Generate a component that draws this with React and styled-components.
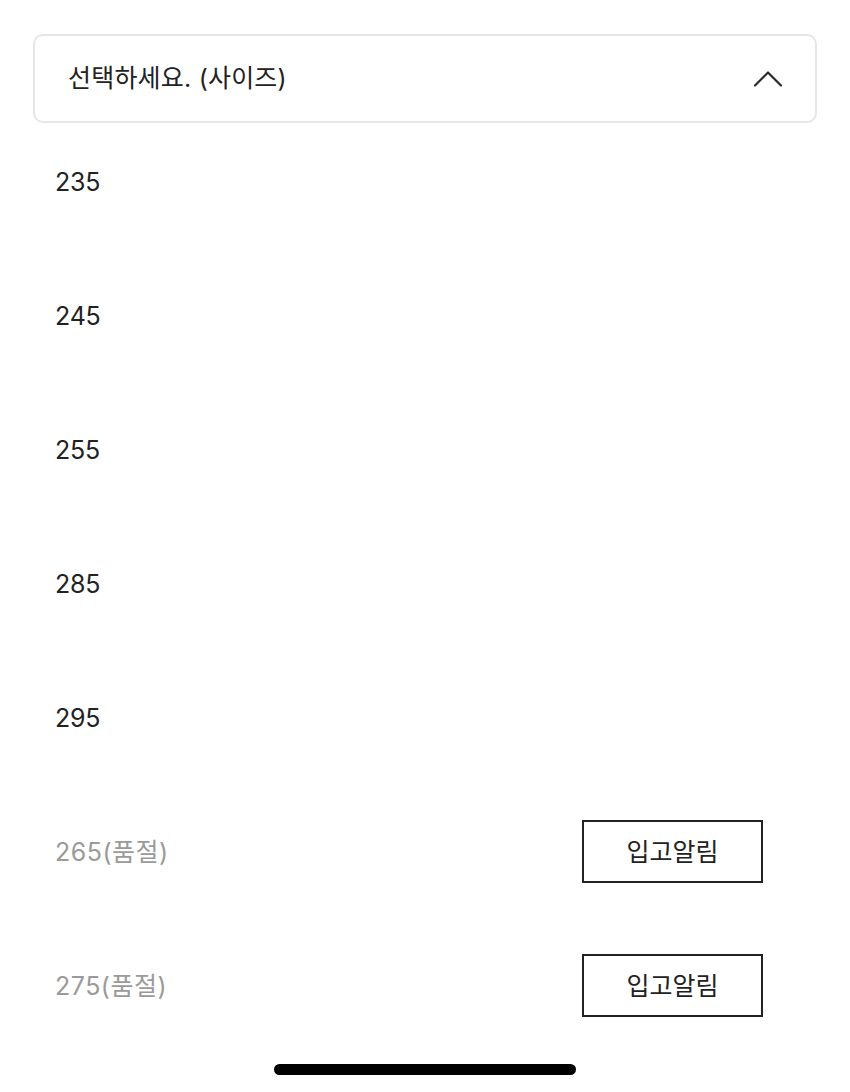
import React from 'react';
import styled, { createGlobalStyle } from 'styled-components';

const GlobalStyle = createGlobalStyle`
  html, body {
    margin: 0;
    padding: 0;
    background: #ffffff;
  }
  body {
    font-family: Inter, "Noto Sans CJK KR", "Noto Sans", sans-serif;
    color: #222222;
  }
`;

const Page = styled.div`
  width: 850px;
  min-height: 1092px;
  box-sizing: border-box;
  padding-top: 34px;
`;

const Select = styled.div`
  margin: 0 33px;
  height: 89px;
  box-sizing: border-box;
  border: 2px solid #e6e6e6;
  border-radius: 10px;
  display: flex;
  align-items: center;
  justify-content: space-between;
  padding: 0 32px 0 33px;
`;

const SelectLabel = styled.span`
  font-size: 25px;
  line-height: 30px;
  letter-spacing: 0.2px;
  color: #222222;
  margin-top: -2px;
`;

const Chevron = () => (
  <svg width="30" height="18" viewBox="0 0 30 18" fill="none">
    <path d="M2 15.5 L15 2.5 L28 15.5" stroke="#2a2a2a" strokeWidth="2.2" strokeLinecap="round" strokeLinejoin="round" />
  </svg>
);

const List = styled.ul`
  list-style: none;
  margin: 0;
  padding: 0;
`;

const Row = styled.li`
  height: 134px;
  box-sizing: border-box;
  padding: 27px 87px 0 55px;
`;

const RowInner = styled.div`
  height: 63px;
  display: flex;
  align-items: center;
  justify-content: space-between;
`;

const Size = styled.span`
  font-size: 25px;
  line-height: 30px;
  letter-spacing: ${p => (p.$soldOut ? '0.5px' : '-0.2px')};
  color: ${p => (p.$soldOut ? '#9a9a9a' : '#222222')};
`;

const NotifyButton = styled.button`
  width: 181px;
  height: 63px;
  box-sizing: border-box;
  border: 2px solid #222222;
  background: #ffffff;
  font-family: inherit;
  font-size: 25px;
  line-height: 30px;
  color: #222222;
  padding: 0;
  cursor: pointer;
`;

const Footer = styled.div`
  display: flex;
  justify-content: center;
  padding-top: 3px;
`;

const HomeBar = styled.div`
  width: 302px;
  height: 11px;
  border-radius: 6px;
  background: #000000;
`;

const sizes = [
  { label: '235' },
  { label: '245' },
  { label: '255' },
  { label: '285' },
  { label: '295' },
  { label: '265(품절)', soldOut: true },
  { label: '275(품절)', soldOut: true },
];

export default function App() {
  return (
    <Page>
      <GlobalStyle />
      <Select>
        <SelectLabel>선택하세요. (사이즈)</SelectLabel>
        <Chevron />
      </Select>
      <List>
        {sizes.map(s => (
          <Row key={s.label}>
            <RowInner>
              <Size $soldOut={s.soldOut}>{s.label}</Size>
              {s.soldOut && <NotifyButton>입고알림</NotifyButton>}
            </RowInner>
          </Row>
        ))}
      </List>
      <Footer>
        <HomeBar />
      </Footer>
    </Page>
  );
}
